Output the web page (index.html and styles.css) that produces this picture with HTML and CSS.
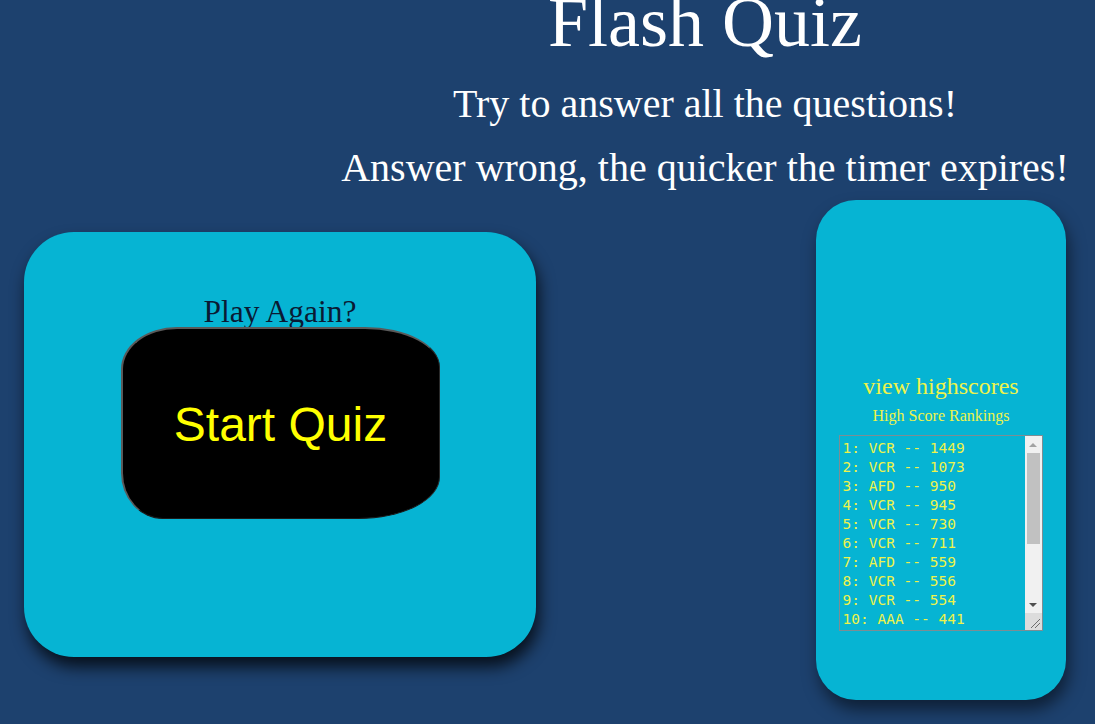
FILE: index.html
```html
<!DOCTYPE html>
<html lang="en">
<head>
<meta charset="utf-8">
<title>Flash Quiz</title>
<link rel="stylesheet" href="styles.css">
</head>
<body>
<header class="header">
  <h1 class="title">Flash Quiz</h1>
  <p class="subtitle">Try to answer all the questions!</p>
  <p class="subtitle subtitle-2">Answer wrong, the quicker the timer expires!</p>
</header>
<main class="main">
  <section class="quiz-card">
    <p class="play-again">Play Again?</p>
    <button class="start-btn">Start Quiz</button>
  </section>
  <aside class="score-card">
    <a class="view-link">view highscores</a>
    <p class="rank-title">High Score Rankings</p>
    <div class="scores-box">
      <textarea class="scores" readonly>1: VCR -- 1449
2: VCR -- 1073
3: AFD -- 950
4: VCR -- 945
5: VCR -- 730
6: VCR -- 711
7: AFD -- 559
8: VCR -- 556
9: VCR -- 554
10: AAA -- 441
11: VCR -- 420
12: AFD -- 398
13: VCR -- 377
14: VCR -- 350
15: AAA -- 312
16: VCR -- 290
17: AFD -- 255
18: VCR -- 210</textarea>
      <div class="scrollbar">
        <span class="sb-btn"><span class="arrow-up"></span></span>
        <span class="sb-track"><span class="sb-thumb"></span></span>
        <span class="sb-btn"><span class="arrow-down"></span></span>
        <span class="sb-resizer">
          <svg width="17" height="17" viewBox="0 0 17 17">
            <line x1="15" y1="6" x2="6" y2="15" stroke="#6e6e6e" stroke-width="1"/>
            <line x1="15" y1="10" x2="10" y2="15" stroke="#6e6e6e" stroke-width="1"/>
          </svg>
        </span>
      </div>
    </div>
  </aside>
</main>
</body>
</html>
```

FILE: styles.css
```css
html, body {
  margin: 0;
  padding: 0;
  background: #1d416e;
  height: 100%;
  overflow: hidden;
}

body {
  font-family: "Liberation Serif", "Times New Roman", serif;
}

.header {
  padding-left: 315px;
  text-align: center;
  color: #ffffff;
}

.title {
  font-size: 72px;
  line-height: 72px;
  font-weight: normal;
  margin: -14px 0 0;
}

.subtitle {
  font-size: 40px;
  line-height: 40px;
  margin: 26px 0 0;
}

.subtitle-2 {
  margin-top: 24px;
}

.main {
  display: flex;
  justify-content: space-between;
  align-items: flex-start;
  padding: 0 29px 0 24px;
  margin-top: 12px;
}

.quiz-card {
  width: 512px;
  height: 425px;
  box-sizing: border-box;
  margin-top: 32px;
  background: #06b4d3;
  border-radius: 50px;
  box-shadow: 3px 10px 16px rgba(0, 0, 0, 0.75);
  display: flex;
  flex-direction: column;
  align-items: center;
  padding-top: 64px;
}

.play-again {
  margin: 0;
  font-size: 31.5px;
  line-height: 31px;
  color: #0a1a33;
}

.start-btn {
  margin-top: 0;
  width: 319px;
  height: 192px;
  background: #000000;
  color: #ffff00;
  font-family: "Liberation Sans", Arial, sans-serif;
  font-size: 48px;
  border-style: solid;
  border-width: 2px 1px 1px 2px;
  border-color: #5a5a5a #2a2a2a #1a1a1a #5a5a5a;
  border-radius: 56px 75px 82px 42px / 42px 40px 42px 46px;
  padding: 2px 0 0;
}

.score-card {
  width: 250px;
  height: 500px;
  box-sizing: border-box;
  background: #06b4d3;
  border-radius: 40px;
  box-shadow: 3px 10px 16px rgba(0, 0, 0, 0.5);
  display: flex;
  flex-direction: column;
  align-items: center;
  padding-top: 174px;
}

.view-link {
  font-size: 24px;
  line-height: 24px;
  color: #eef34a;
}

.rank-title {
  margin: 10px 0 0;
  font-size: 16px;
  line-height: 16px;
  color: #eef34a;
}

.scores-box {
  margin: 11px 0 0 -1px;
  width: 204px;
  height: 196px;
  box-sizing: border-box;
  border: 1px solid #7d8d93;
  display: flex;
}

.scores {
  flex: 1;
  min-width: 0;
  height: 100%;
  box-sizing: border-box;
  margin: 0;
  background: transparent;
  border: none;
  padding: 3px 2px 0 3px;
  font-family: "DejaVu Sans Mono", monospace;
  font-size: 14.5px;
  line-height: 19px;
  color: #eef34a;
  resize: none;
  overflow: hidden;
  outline: none;
}

.scrollbar {
  width: 17px;
  flex: none;
  background: #f1f1f1;
  display: flex;
  flex-direction: column;
}

.sb-btn {
  height: 17px;
  display: flex;
  align-items: center;
  justify-content: center;
}

.arrow-up {
  width: 0;
  height: 0;
  border-left: 4px solid transparent;
  border-right: 4px solid transparent;
  border-bottom: 4px solid #a3a3a3;
}

.arrow-down {
  width: 0;
  height: 0;
  border-left: 4px solid transparent;
  border-right: 4px solid transparent;
  border-top: 4px solid #505050;
}

.sb-track {
  flex: 1;
  padding: 0 2px;
}

.sb-thumb {
  display: block;
  height: 91px;
  background: #c1c1c1;
}

.sb-resizer {
  height: 17px;
  background: #dcdcdc;
  display: block;
}

.sb-resizer svg {
  display: block;
}
```
